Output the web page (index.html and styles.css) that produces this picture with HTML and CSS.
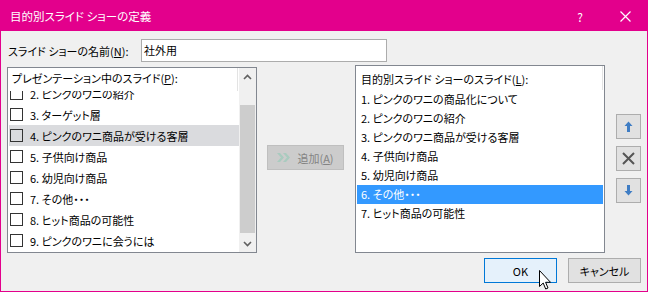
FILE: index.html
```html
<!DOCTYPE html>
<html lang="ja">
<head>
    <meta charset="UTF-8">
    <title>目的別スライド ショーの定義</title>
    <link rel="stylesheet" href="styles.css">
</head>
<body>
    <div class="window">
        <div class="titlebar">
            <span class="title">目的別スライド ショーの定義</span>
            <span class="help">?</span>
            <span class="close">
                <svg width="11" height="11" viewBox="0 0 11 11"><path d="M0.5 0.5 L10.5 10.5 M10.5 0.5 L0.5 10.5" stroke="#fff" stroke-width="1.2"/></svg>
            </span>
        </div>

        <div class="content">
            <div class="name-row">
                <label class="name-label">スライド ショーの名前(<u>N</u>):</label>
                <div class="name-input">社外用</div>
            </div>

            <div class="main">
                <div class="list list-left">
                    <div class="list-body">
                        <div class="list-head">プレゼンテーション中のスライド(<u>P</u>):</div>
                        <div class="viewport">
                            <ul class="items items-left">
                                <li><span class="check"></span>2. ピンクのワニの紹介</li>
                                <li><span class="check"></span>3. ターゲット層</li>
                                <li class="hover"><span class="check"></span>4. ピンクのワニ商品が受ける客層</li>
                                <li><span class="check"></span>5. 子供向け商品</li>
                                <li><span class="check"></span>6. 幼児向け商品</li>
                                <li><span class="check"></span>7. その他・・・</li>
                                <li><span class="check"></span>8. ヒット商品の可能性</li>
                                <li><span class="check"></span>9. ピンクのワニに会うには</li>
                            </ul>
                        </div>
                    </div>
                    <div class="scrollbar">
                        <div class="sb-btn">
                            <svg width="9" height="6" viewBox="0 0 9 6"><path d="M1 5 L4.5 1.5 L8 5" fill="none" stroke="#606060" stroke-width="1.6"/></svg>
                        </div>
                        <div class="sb-track"><div class="sb-thumb"></div></div>
                        <div class="sb-btn">
                            <svg width="9" height="6" viewBox="0 0 9 6"><path d="M1 1 L4.5 4.5 L8 1" fill="none" stroke="#606060" stroke-width="1.6"/></svg>
                        </div>
                    </div>
                </div>

                <div class="middle">
                    <div class="btn add-btn">
                        <svg width="14" height="9" viewBox="0 0 14 9"><path d="M0 0 H3 L7 4.5 L3 9 H0 L4 4.5 Z M6 0 H9 L13 4.5 L9 9 H6 L10 4.5 Z" fill="#a9cbbf"/></svg>
                        <span>追加(<u>A</u>)</span>
                    </div>
                </div>

                <div class="list list-right">
                    <div class="list-body">
                        <div class="list-head list-head-right">目的別スライド ショーのスライド(<u>L</u>):</div>
                        <ul class="items items-right">
                            <li>1. ピンクのワニの商品化について</li>
                            <li>2. ピンクのワニの紹介</li>
                            <li>3. ピンクのワニ商品が受ける客層</li>
                            <li>4. 子供向け商品</li>
                            <li>5. 幼児向け商品</li>
                            <li class="selected">6. その他・・・</li>
                            <li>7. ヒット商品の可能性</li>
                        </ul>
                    </div>
                </div>

                <div class="side-btns">
                    <div class="btn side-btn">
                        <svg width="9" height="11" viewBox="0 0 9 11"><path d="M4.5 0.5 L8.5 5 H6 V11 H3 V5 H0.5 Z" fill="#3f7dc4"/></svg>
                    </div>
                    <div class="btn side-btn">
                        <svg width="13" height="13" viewBox="0 0 13 13"><path d="M1 1 L12 12 M12 1 L1 12" stroke="#555" stroke-width="2"/></svg>
                    </div>
                    <div class="btn side-btn">
                        <svg width="9" height="11" viewBox="0 0 9 11"><path d="M4.5 10.5 L8.5 6 H6 V0 H3 V6 H0.5 Z" fill="#3f7dc4"/></svg>
                    </div>
                </div>
            </div>

            <div class="footer">
                <div class="btn ok-btn">OK</div>
                <div class="btn">キャンセル</div>
            </div>
        </div>

        <svg class="cursor" width="13" height="21" viewBox="0 0 13 21"><path d="M0.5 0.5 V16.5 L4.2 13 L6.7 19 L9 18 L6.6 12.3 H11.5 Z" fill="#fff" stroke="#000" stroke-width="1" stroke-linejoin="miter"/></svg>
    </div>
</body>
</html>
```

FILE: styles.css
```css
body {
    margin: 0;
    font-family: "Noto Sans CJK JP", "Noto Sans", sans-serif;
    font-size: 11px;
    font-feature-settings: "palt";
    color: #000;
    background: #fff;
}
.window {
    position: relative;
    width: 646px;
    height: 290px;
    border: 1px solid #e3008c;
    background: #f0f0f0;
}
.titlebar {
    height: 30px;
    background: #e3008c;
    color: #fff;
    display: flex;
    align-items: center;
    padding-left: 9px;
    padding-right: 16px;
}
.title {
    flex: 1;
    font-size: 11.5px;
}
.help {
    font-size: 12px;
    margin-right: 37px;
}
.close {
    display: flex;
    align-items: center;
}
.content {
    padding: 8px 6px 0 6px;
}
.name-row {
    display: flex;
    align-items: center;
    height: 23px;
}
.name-label {
    padding-left: 1px;
    width: 133px;
}
.name-input {
    width: 242px;
    height: 21px;
    line-height: 21px;
    padding-left: 2px;
    background: #fff;
    border: 1px solid #acacac;
}
.main {
    display: flex;
    margin-top: 3px;
    height: 188px;
}
.list {
    border: 1px solid #828790;
    background: #fff;
    width: 248px;
    display: flex;
}
.list-left {
    margin-top: 2px;
    height: 184px;
}
.list-right {
    height: 186px;
}
.list-body {
    flex: 1;
    display: flex;
    flex-direction: column;
    overflow: hidden;
}
.list-head {
    height: 23px;
    line-height: 21px;
    padding-left: 4px;
    border-right: 1px solid #e3e3e3;
    margin-right: 1px;
    flex-shrink: 0;
    position: relative;
    z-index: 1;
    background: #fff;
}
.list-head-right {
    height: 24px;
    line-height: 26px;
    padding-left: 5px;
}
.viewport {
    flex: 1;
    overflow: hidden;
}
.items {
    list-style: none;
    margin: 0;
    padding: 0;
}
.items-left {
    margin-top: -8px;
}
.items-left li {
    height: 21px;
    display: flex;
    align-items: center;
    margin-left: 1px;
}
.items-left li.hover {
    background: #dadbde;
}
.check {
    width: 11px;
    height: 11px;
    border: 1px solid #333;
    margin-left: 1px;
    margin-right: 7px;
}
.items-right li {
    height: 19px;
    line-height: 19px;
    padding-left: 4px;
    margin: 0 1px;
}
.items-right li.selected {
    background: #3399ff;
    color: #fff;
}
.scrollbar {
    width: 17px;
    display: flex;
    flex-direction: column;
    background: #f0f0f0;
}
.sb-btn {
    height: 17px;
    display: flex;
    align-items: center;
    justify-content: center;
}
.sb-track {
    flex: 1;
    padding-top: 20px;
}
.sb-thumb {
    height: 128px;
    margin: 0 1px;
    background: #cdcdcd;
}
.middle {
    width: 98px;
    padding-left: 10px;
    box-sizing: border-box;
}
.btn {
    display: flex;
    align-items: center;
    justify-content: center;
    height: 23px;
    border: 1px solid #adadad;
    background: #e1e1e1;
    box-sizing: content-box;
}
.add-btn {
    width: 75px;
    margin-top: 80px;
    background: #cccccc;
    border-color: #bfbfbf;
    color: #838383;
    gap: 6px;
}
.side-btns {
    padding-left: 11px;
    padding-top: 49px;
    display: flex;
    flex-direction: column;
    gap: 7px;
}
.side-btn {
    width: 23px;
}
.footer {
    display: flex;
    justify-content: flex-end;
    gap: 11px;
    margin-top: 5px;
}
.footer .btn {
    width: 71px;
}
.ok-btn {
    background: #e5f1fb;
    border-color: #0078d7;
}
.cursor {
    position: absolute;
    left: 538px;
    top: 269px;
}
```
